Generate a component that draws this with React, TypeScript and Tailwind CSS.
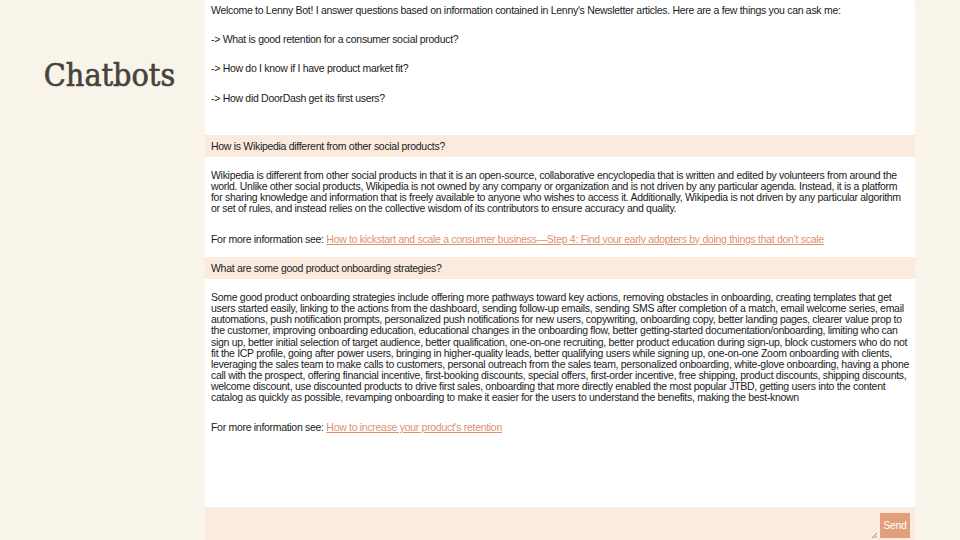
const font = { fontFamily: '"Liberation Sans", Arial, sans-serif' };

type Msg = { q: string; a: string; linkText: string };

const messages: Msg[] = [
  {
    q: "How is Wikipedia different from other social products?",
    a: "Wikipedia is different from other social products in that it is an open-source, collaborative encyclopedia that is written and edited by volunteers from around the world. Unlike other social products, Wikipedia is not owned by any company or organization and is not driven by any particular agenda. Instead, it is a platform for sharing knowledge and information that is freely available to anyone who wishes to access it. Additionally, Wikipedia is not driven by any particular algorithm or set of rules, and instead relies on the collective wisdom of its contributors to ensure accuracy and quality.",
    linkText:
      "How to kickstart and scale a consumer business—Step 4: Find your early adopters by doing things that don’t scale",
  },
  {
    q: "What are some good product onboarding strategies?",
    a: "Some good product onboarding strategies include offering more pathways toward key actions, removing obstacles in onboarding, creating templates that get users started easily, linking to the actions from the dashboard, sending follow-up emails, sending SMS after completion of a match, email welcome series, email automations, push notification prompts, personalized push notifications for new users, copywriting, onboarding copy, better landing pages, clearer value prop to the customer, improving onboarding education, educational changes in the onboarding flow, better getting-started documentation/onboarding, limiting who can sign up, better initial selection of target audience, better qualification, one-on-one recruiting, better product education during sign-up, block customers who do not fit the ICP profile, going after power users, bringing in higher-quality leads, better qualifying users while signing up, one-on-one Zoom onboarding with clients, leveraging the sales team to make calls to customers, personal outreach from the sales team, personalized onboarding, white-glove onboarding, having a phone call with the prospect, offering financial incentive, first-booking discounts, special offers, first-order incentive, free shipping, product discounts, shipping discounts, welcome discount, use discounted products to drive first sales, onboarding that more directly enabled the most popular JTBD, getting users into the content catalog as quickly as possible, revamping onboarding to make it easier for the users to understand the benefits, making the best-known",
    linkText: "How to increase your product's retention",
  },
];

const suggestions = [
  "-> What is good retention for a consumer social product?",
  "-> How do I know if I have product market fit?",
  "-> How did DoorDash get its first users?",
];

export default function App() {
  return (
    <div className="flex h-[540px] w-[960px] overflow-hidden bg-[#f9f4ea]">
      <div className="w-[205px] shrink-0 pt-[52px] pl-[14px] text-center">
        <h1
          className="text-[32px] font-normal leading-[46px] text-[#47423b] [-webkit-text-stroke:0.6px_#47423b]"
          style={{ fontFamily: '"DejaVu Serif Condensed", "DejaVu Serif", serif' }}
        >
          Chatbots
        </h1>
      </div>

      <div className="flex h-[540px] w-[710px] shrink-0 flex-col rounded-tr-[4px] bg-white" style={font}>
        <div className="flex-1 overflow-hidden text-[10.5px] leading-[11.1px] tracking-[-0.3px] text-[#1b1b1b]">
          <div className="flex flex-col gap-[18.4px] px-[6px] pt-[4.5px] pb-[31px]">
            <p>
              Welcome to Lenny Bot! I answer questions based on information contained in Lenny's Newsletter
              articles. Here are a few things you can ask me:
            </p>
            {suggestions.map((s) => (
              <p key={s}>{s}</p>
            ))}
          </div>

          {messages.map((m) => (
            <div key={m.q}>
              <div className="bg-[#fbebdf] px-[6px] py-[5.5px]">{m.q}</div>
              <div className="flex flex-col gap-[19px] pt-[13px] pb-[12.5px] pl-[6px] pr-[6px]">
                <p>{m.a}</p>
                <p>
                  For more information see:{" "}
                  <a href="#" className="text-[#e1906f] underline">
                    {m.linkText}
                  </a>
                </p>
              </div>
            </div>
          ))}
        </div>

        <div className="flex h-[33px] items-start justify-end bg-[#fbebdf] pr-[5px] pt-[6px]">
          <div className="relative h-[27px] flex-1">
            <svg className="absolute bottom-[2px] right-[3px]" width="6" height="6" viewBox="0 0 6 6">
              <path d="M1 6 L6 1 M3.5 6 L6 3.5" stroke="#777" strokeWidth="0.8" />
            </svg>
          </div>
          <button className="h-[25px] w-[30px] bg-[#e29f7a] text-[10.5px] tracking-[-0.3px] text-white">Send</button>
        </div>
      </div>
    </div>
  );
}
